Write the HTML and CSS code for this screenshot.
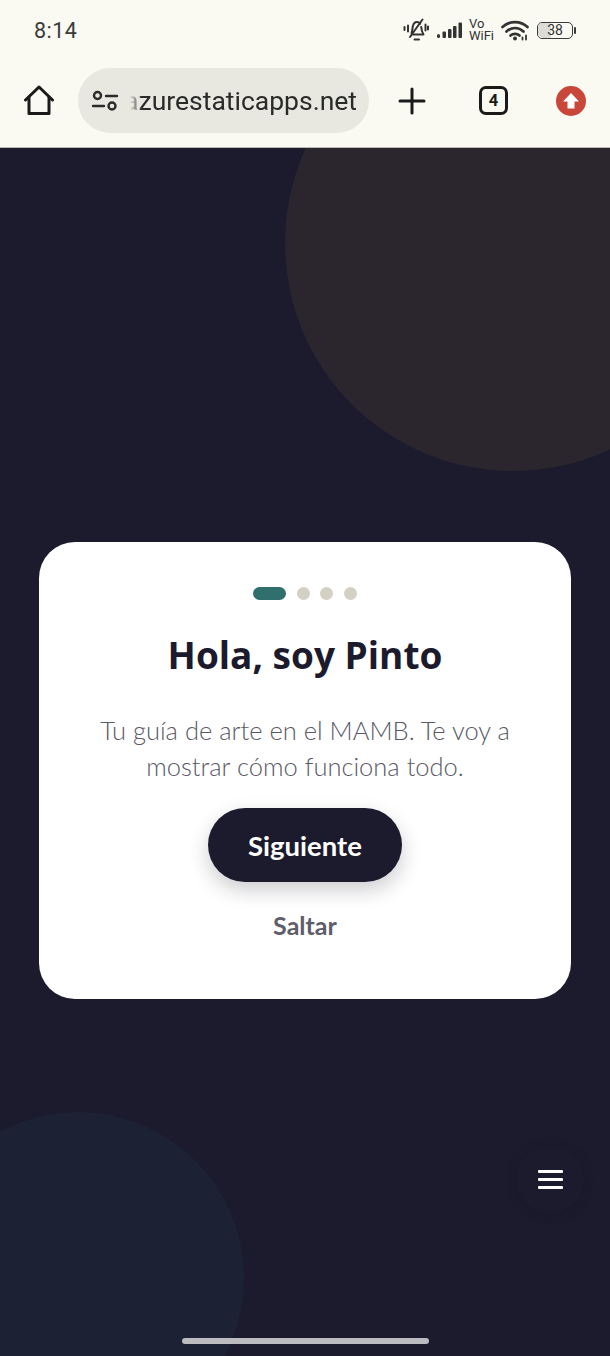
FILE: index.html
```html
<!DOCTYPE html>
<html lang="es">
<head>
<meta charset="utf-8">
<title>Hola, soy Pinto</title>
<link rel="stylesheet" href="styles.css">
</head>
<body>
<div class="chrome">
  <div class="status">
    <span class="time">8:14</span>
    <div class="status-icons">
      <svg class="i-bell" width="26" height="24" viewBox="0 0 26 24" fill="none" stroke="#333" stroke-width="2" stroke-linecap="round" stroke-linejoin="round"><path d="M8.500 15c1-2 .8-4 1.300-6.500C10.400 5.500 12 4 14 4c1.300 0 2.500.6 3.200 1.600"/><path d="M18.200 9c.2 2.500.6 5 2.300 7.500H10"/><path d="M11.500 21.500h4.500"/><path d="M7 19 19.500 1.500"/><path d="M5 7.500v6M1.500 9v3M22.500 6.500v6M25 8.500v3"/></svg>
      <svg class="i-signal" width="26" height="18" viewBox="0 0 26 18" fill="#333"><rect x="0" y="13" width="3" height="4" rx="1.500"/><rect x="5.500" y="10.500" width="3.500" height="6.500" rx="1"/><rect x="11" y="8" width="3.500" height="9" rx="1"/><rect x="16" y="5" width="3.500" height="12" rx="1"/><rect x="21.500" y="1.500" width="3.500" height="15.500" rx="1"/></svg>
      <span class="vowifi">Vo<br>WiFi</span>
      <svg class="i-wifi" width="28" height="22" viewBox="0 0 28 22" fill="none" stroke="#333" stroke-width="2.700" stroke-linecap="round"><path d="M1.500 8C8.500 1.500 19.500 1.500 26.500 8"/><path d="M5.500 12.500C10.500 7.800 17.500 7.800 22.500 12.500"/><path d="M9.500 16.500C12 14.300 16 14.300 18.500 16.500"/><circle cx="14" cy="19.500" r="2" fill="#333" stroke="none"/><path d="M21.500 18.500v2M25 16.500v4" stroke-width="1.800"/></svg>
      <span class="battery"><span class="battery-body"><span class="battery-fill"></span><span class="battery-num">38</span></span><span class="battery-cap"></span></span>
    </div>
  </div>
  <div class="toolbar">
    <svg class="home" width="32" height="32" viewBox="0 0 32 32" fill="none" stroke="#1a1a1a" stroke-width="3" stroke-linejoin="round" stroke-linecap="round"><path d="M2.500 15 16 2l13.500 13"/><path d="M6 12v16.500h20V12"/></svg>
    <div class="omnibox">
      <svg class="tune" width="28" height="24" viewBox="0 0 28 24" fill="none" stroke="#2a2a2a" stroke-width="2.400" stroke-linecap="round"><circle cx="6.500" cy="6.500" r="3.500"/><path d="M15 7h11"/><path d="M2 17h11"/><circle cx="21" cy="17" r="3.500"/></svg>
      <span class="url"><span>azurestaticapps.net</span></span>
    </div>
    <svg class="plus" width="28" height="28" viewBox="0 0 28 28" stroke="#1a1a1a" stroke-width="3" stroke-linecap="round"><path d="M14 2v24M2 14h24"/></svg>
    <span class="tabs">4</span>
    <span class="update"><svg width="18" height="18" viewBox="0 0 18 18" fill="#fff"><path d="M9 1 17 9.500h-4.500v7h-7v-7H1z"/></svg></span>
  </div>
</div>
<main class="page">
  <div class="blob blob-top"></div>
  <div class="blob blob-bottom"></div>
  <section class="card">
    <div class="dots"><span class="dot dot-active"></span><span class="dot"></span><span class="dot"></span><span class="dot"></span></div>
    <h1>Hola, soy Pinto</h1>
    <p>Tu guía de arte en el MAMB. Te voy a mostrar cómo funciona todo.</p>
    <button class="next">Siguiente</button>
    <button class="skip">Saltar</button>
  </section>
  <button class="fab" aria-label="Menú"><span></span><span></span><span></span></button>
  <div class="home-bar"></div>
</main>
</body>
</html>
```
FILE: styles.css
```css
* { box-sizing: border-box; }
html, body { margin: 0; padding: 0; }
body {
  width: 610px;
  height: 1356px;
  overflow: hidden;
  display: flex;
  flex-direction: column;
  font-family: "Lato", "Liberation Sans", sans-serif;
}
.chrome {
  height: 148px;
  flex: none;
  background: #fafaf2;
  border-bottom: 1px solid #b9b9b4;
}
.status {
  height: 60px;
  padding: 0 34px 0 34px;
  display: flex;
  justify-content: space-between;
  align-items: center;
}
.time {
  font-family: "Roboto", sans-serif;
  font-size: 21.500px;
  color: #3a3a3a;
  letter-spacing: 0.5px;
  font-weight: 400;
}
.status-icons { display: flex; align-items: center; gap: 8px; }
.vowifi {
  display: block;
  font-family: "Roboto", sans-serif;
  font-size: 13px;
  line-height: 12px;
  color: #333;
  margin: 0 -1px 0 -2px;
}
.battery { display: flex; align-items: center; gap: 1px; }
.battery-body {
  position: relative;
  width: 36px;
  height: 17px;
  border: 1.500px solid #3a3a3a;
  border-radius: 5px;
  display: flex;
  align-items: center;
  justify-content: center;
  overflow: hidden;
}
.battery-fill { position: absolute; left: 0; top: 0; bottom: 0; width: 38%; background: #dcdcd6; }
.battery-num { position: relative; font-family: "Roboto", sans-serif; font-size: 14px; color: #333; }
.battery-cap { width: 2px; height: 7px; background: #3a3a3a; border-radius: 1px; }
.toolbar {
  height: 87px;
  display: flex;
  align-items: flex-start;
  position: relative;
}
.home { margin: 25px 0 0 23px; flex: none; }
.omnibox {
  margin: 8px 0 0 23px;
  width: 291px;
  height: 65px;
  flex: none;
  border-radius: 33px;
  background: #e8e8e1;
  display: flex;
  align-items: center;
  padding: 0 12px 0 13px;
  gap: 11px;
}
.tune { flex: none; }
.url {
  flex: 1;
  min-width: 0;
  overflow: hidden;
  display: flex;
  justify-content: flex-end;
  font-family: "Roboto", sans-serif;
  font-size: 26.500px;
  color: #2a2a2a;
  white-space: nowrap;
  -webkit-mask-image: linear-gradient(to right, transparent 0, #000 12px);
  mask-image: linear-gradient(to right, transparent 0, #000 12px);
}
.plus { margin: 27px 0 0 29px; flex: none; }
.tabs {
  margin: 26px 0 0 53px;
  width: 29px;
  height: 29px;
  flex: none;
  border: 3px solid #1a1a1a;
  border-radius: 7px;
  display: flex;
  align-items: center;
  justify-content: center;
  font-family: "Roboto", sans-serif;
  font-weight: 700;
  font-size: 16.500px;
  color: #1a1a1a;
}
.update {
  margin: 26px 0 0 48px;
  width: 30px;
  height: 30px;
  flex: none;
  border-radius: 50%;
  background: #c8463a;
  display: flex;
  align-items: center;
  justify-content: center;
}
.page {
  flex: 1;
  position: relative;
  overflow: hidden;
  background: #1c1b2e;
  padding: 394px 39px 0;
}
.blob { position: absolute; border-radius: 50%; }
.blob-top { width: 456px; height: 456px; left: 285px; top: -133px; background: #2b262e; }
.blob-bottom { width: 332px; height: 332px; left: -88px; top: 964px; background: #1c2133; }
.card {
  position: relative;
  height: 457px;
  background: #fff;
  border-radius: 36px;
  display: flex;
  flex-direction: column;
  align-items: center;
  padding-top: 45px;
}
.dots { display: flex; align-items: center; gap: 10.500px; height: 13px; }
.dot { width: 13px; height: 13px; border-radius: 50%; background: #d4d0c4; }
.dot-active { width: 33px; border-radius: 7px; background: #2f6f6e; }
h1 {
  margin: 31px 0 0;
  font-family: "Open Sans", sans-serif;
  font-weight: 700;
  font-size: 37px;
  line-height: 48px;
  color: #1c1b2e;
}
p {
  margin: 33px 0 0;
  width: 430px;
  text-align: center;
  font-weight: 300;
  font-size: 25.500px;
  line-height: 36px;
  color: #5a5966;
}
.next {
  margin-top: 24px;
  width: 194px;
  height: 74px;
  flex: none;
  border: 0;
  border-radius: 37px;
  background: #1c1b2e;
  color: #fff;
  font-family: "Lato", sans-serif;
  font-weight: 700;
  font-size: 27.500px;
  box-shadow: 0 8px 20px rgba(28, 27, 46, 0.22);
}
.skip {
  margin-top: 26px;
  border: 0;
  padding: 0;
  background: none;
  color: #5e5d6b;
  font-family: "Lato", sans-serif;
  font-weight: 700;
  font-size: 25px;
  line-height: 34px;
}
.fab {
  position: absolute;
  left: 516px;
  top: 997px;
  width: 68px;
  height: 68px;
  border: 0;
  border-radius: 50%;
  background: #1c1b2e;
  box-shadow: 0 2px 10px rgba(20, 20, 36, 0.35);
  display: flex;
  flex-direction: column;
  align-items: center;
  justify-content: center;
  gap: 5px;
}
.fab span { width: 25px; height: 3px; background: #fff; border-radius: 1px; }
.home-bar {
  position: absolute;
  left: 182px;
  top: 1190px;
  width: 247px;
  height: 6px;
  border-radius: 3px;
  background: #bcbcc0;
}
```
